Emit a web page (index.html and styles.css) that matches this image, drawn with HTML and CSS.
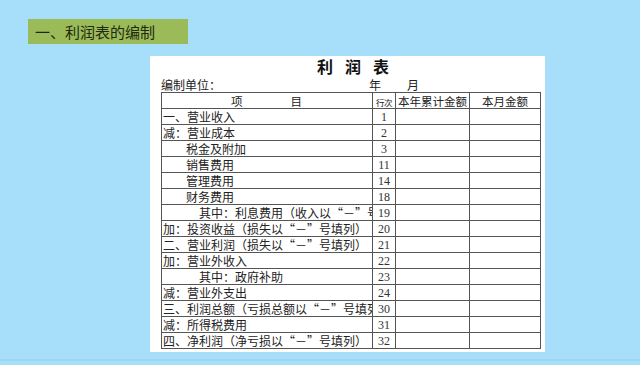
FILE: index.html
```html
<!DOCTYPE html>
<html lang="zh">
<head>
<meta charset="utf-8">
<link rel="stylesheet" href="styles.css">
</head>
<body>
<div class="slide">
  <div class="heading">一、利润表的编制</div>
  <div class="sheet">
    <div class="title">利润表</div>
    <div class="meta">
      <span class="unit">编制单位：</span>
      <span class="year">年</span>
      <span class="month">月</span>
    </div>
    <table class="report">
      <colgroup>
        <col class="c-item"><col class="c-no"><col class="c-ytd"><col class="c-month">
      </colgroup>
      <thead>
        <tr>
          <th class="h-item"><span>项</span><span>目</span></th>
          <th class="h-no">行次</th>
          <th>本年累计金额</th>
          <th>本月金额</th>
        </tr>
      </thead>
      <tbody>
        <tr><td class="item">一、营业收入</td><td class="no">1</td><td></td><td></td></tr>
        <tr><td class="item">减：营业成本</td><td class="no">2</td><td></td><td></td></tr>
        <tr><td class="item ind1">税金及附加</td><td class="no">3</td><td></td><td></td></tr>
        <tr><td class="item ind1">销售费用</td><td class="no">11</td><td></td><td></td></tr>
        <tr><td class="item ind1">管理费用</td><td class="no">14</td><td></td><td></td></tr>
        <tr><td class="item ind1">财务费用</td><td class="no">18</td><td></td><td></td></tr>
        <tr><td class="item ind2"><div class="clip">其中：利息费用（收入以“－”号填列）</div></td><td class="no">19</td><td></td><td></td></tr>
        <tr><td class="item">加：投资收益（损失以“－”号填列）</td><td class="no">20</td><td></td><td></td></tr>
        <tr><td class="item">二、营业利润（损失以“－”号填列）</td><td class="no">21</td><td></td><td></td></tr>
        <tr><td class="item">加：营业外收入</td><td class="no">22</td><td></td><td></td></tr>
        <tr><td class="item ind2">其中：政府补助</td><td class="no">23</td><td></td><td></td></tr>
        <tr><td class="item">减：营业外支出</td><td class="no">24</td><td></td><td></td></tr>
        <tr><td class="item"><div class="clip">三、利润总额（亏损总额以“－”号填列）</div></td><td class="no">30</td><td></td><td></td></tr>
        <tr><td class="item">减：所得税费用</td><td class="no">31</td><td></td><td></td></tr>
        <tr><td class="item">四、净利润（净亏损以“－”号填列）</td><td class="no">32</td><td></td><td></td></tr>
      </tbody>
    </table>
  </div>
</div>
</body>
</html>
```
FILE: styles.css
```css
html, body {
  margin: 0;
  padding: 0;
}
body {
  width: 640px;
  height: 365px;
  overflow: hidden;
  background: #a7dffa;
  font-family: "Noto Sans CJK SC", "Noto Sans", sans-serif;
}
.slide {
  height: 361px;
  padding-top: 19px;
  box-sizing: border-box;
  border-bottom: 2px solid #a0d6f0;
}
.heading {
  margin-left: 28px;
  width: 160px;
  height: 25px;
  box-sizing: border-box;
  padding-left: 7px;
  background: #9bbb59;
  color: #1e2a10;
  font-size: 15px;
  line-height: 25px;
}
.sheet {
  margin-top: 12px;
  margin-left: 150px;
  width: 395px;
  height: 296px;
  box-sizing: border-box;
  background: #fff;
  padding: 0 0 0 11px;
  color: #222;
}
.title {
  width: 378px;
  text-align: center;
  font-size: 16px;
  font-weight: bold;
  letter-spacing: 12px;
  text-indent: 12px;
  line-height: 20px;
  height: 20px;
  color: #111;
  padding-left: 6px;
  box-sizing: border-box;
}
.meta {
  display: flex;
  height: 16px;
  font-size: 12px;
  line-height: 15px;
  align-items: flex-end;
}
.unit { width: 208px; }
.year { width: 38px; }
.report {
  border-collapse: collapse;
  table-layout: fixed;
  width: 379px;
  font-size: 12px;
  color: #222;
}
.c-item { width: 211px; }
.c-no { width: 23px; }
.c-ytd { width: 74px; }
.c-month { width: 71px; }
.report th, .report td {
  border: 1px solid #555;
  height: 15px;
  padding: 0;
  line-height: 14px;
  vertical-align: bottom;
  white-space: nowrap;
  overflow: hidden;
}
.report th {
  font-weight: normal;
  font-size: 11.5px;
  text-align: center;
}
.report th.h-item {
  text-align: left;
  padding-left: 69px;
}
.h-item span + span { margin-left: 48px; }
.report th.h-no {
  font-size: 8.5px;
  line-height: 11px;
  letter-spacing: -0.5px;
}
.report td.item {
  padding-left: 1px;
}
.clip {
  overflow: hidden;
  white-space: nowrap;
}
.report td.ind1 { padding-left: 24px; }
.report td.ind2 { padding-left: 37px; }
.report td.no {
  text-align: center;
  font-family: "Liberation Serif", "DejaVu Serif", serif;
  font-size: 12px;
  color: #333;
}
```
